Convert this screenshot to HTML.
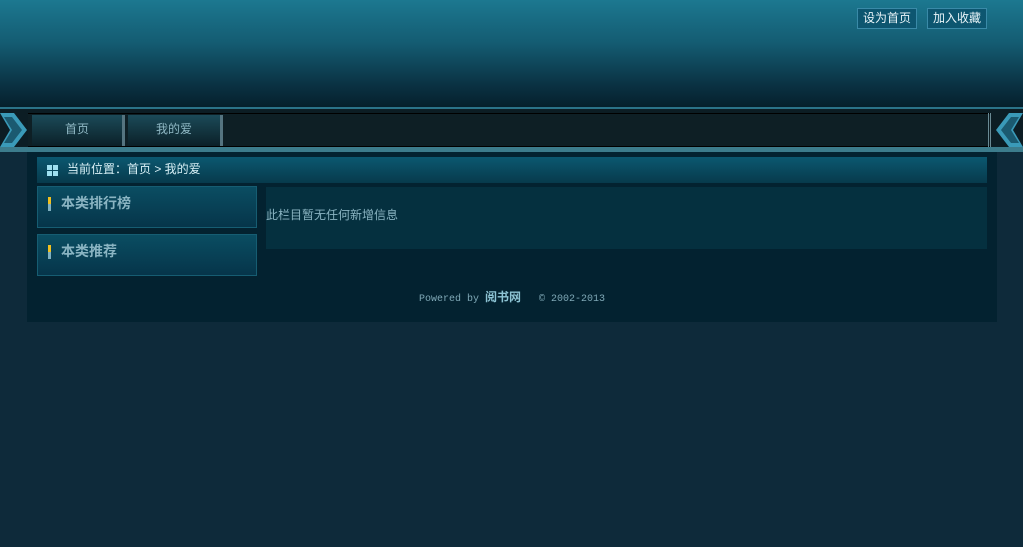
<!DOCTYPE html>
<html><head><meta charset="utf-8"><style>
*{margin:0;padding:0;box-sizing:border-box}
body{width:1023px;height:547px;overflow:hidden;background:#0e2a3a;font-family:"Liberation Sans","Noto Sans CJK SC",sans-serif;font-size:12px;position:relative}
.hdr{position:absolute;left:0;top:0;width:1023px;height:107px;background:linear-gradient(#1c7890 0%,#145c72 40%,#0a3142 80%,#05202c 100%)}
.btn{position:absolute;top:8px;height:21px;border:1px solid #3a8aa8;background:#0d5670;color:#e8f4f8;font-size:12px;line-height:19px;text-align:center}
.nav{position:absolute;left:0;top:107px;width:1023px;height:45px;background:#0c1d24}
.nav .l1{position:absolute;left:0;top:0;width:1023px;height:2px;background:#2a7388}
.nav .bar{position:absolute;left:28px;top:6px;width:962px;height:34px;background:#0e1f25;border-top:1px solid #000;border-bottom:1px solid #000}
.nav .l2{position:absolute;left:0;top:40px;width:1023px;height:5px;background:#3c7c8c}
.tab{position:absolute;top:8px;height:31px;background:linear-gradient(#1b4a58,#0b2028);color:#8fb8c4;line-height:28px;text-align:center;border-right:3px solid #557480}
.main{position:absolute;left:27px;top:152px;width:970px;height:170px;background:#032230}
.crumb{position:absolute;left:10px;top:5px;width:950px;height:26px;background:linear-gradient(#0b5870,#073a4c);color:#d8f0f6;line-height:25px;padding-left:30px}
.box{position:absolute;left:10px;width:220px;height:42px;background:linear-gradient(#0a4d62,#06354a);border:1px solid #165d72;color:#8ab4c2;font-weight:bold;font-size:14px;line-height:32px;padding-left:23px}
.box i{position:absolute;left:10px;top:10px;width:3px;height:14px;background:linear-gradient(#f0c020 50%,#7fb0c0 50%)}
.content{position:absolute;left:239px;top:35px;width:721px;height:62px;background:#05303f;color:#8ab4c2;line-height:56px}
.foot{position:absolute;left:0;top:136px;width:970px;text-align:center;color:#7fa8b6;font-family:"Liberation Mono","Noto Sans CJK SC",monospace;font-size:10px}
</style></head><body>
<div class="hdr"></div>
<div class="btn" style="left:857px;width:60px">设为首页</div>
<div class="btn" style="left:927px;width:60px">加入收藏</div>
<div class="nav"><div class="l1"></div><div class="bar"></div><div class="l2"></div>
<svg style="position:absolute;left:0;top:6px" width="28" height="34"><polygon points="0,0 14,0 27,17 14,34 0,34 10,17" fill="#3a9ab8"/><polygon points="4,4 12,4 22,17 12,30 4,30 12,17" fill="#1b5a70"/></svg>
<svg style="position:absolute;left:995px;top:6px" width="28" height="34"><polygon points="28,0 14,0 1,17 14,34 28,34 18,17" fill="#3a9ab8"/><polygon points="24,4 16,4 6,17 16,30 24,30 16,17" fill="#1b5a70"/></svg>
<div style="position:absolute;left:988px;top:6px;width:3px;height:34px;border-left:1px solid #6a8a94;border-right:1px solid #6a8a94"></div>
<div class="tab" style="left:32px;width:93px">首页</div>
<div class="tab" style="left:128px;width:95px">我的爱</div>
</div>
<div class="main">
<div class="crumb"><svg style="position:absolute;left:10px;top:8px" width="12" height="12"><rect x="0" y="0" width="5" height="5" fill="#9fe0f0"/><rect x="6" y="0" width="5" height="5" fill="#9fe0f0"/><rect x="0" y="6" width="5" height="5" fill="#9fe0f0"/><rect x="6" y="6" width="5" height="5" fill="#9fe0f0"/></svg>当前位置：首页 &gt; 我的爱</div>
<div class="box" style="top:34px"><i></i>本类排行榜</div>
<div class="box" style="top:82px"><i></i>本类推荐</div>
<div class="content">此栏目暂无任何新增信息</div>
<div class="foot">Powered by <b style="font-size:12px;color:#8ec4d4">阅书网</b> &nbsp; © 2002-2013</div>
</div>
</body></html>
